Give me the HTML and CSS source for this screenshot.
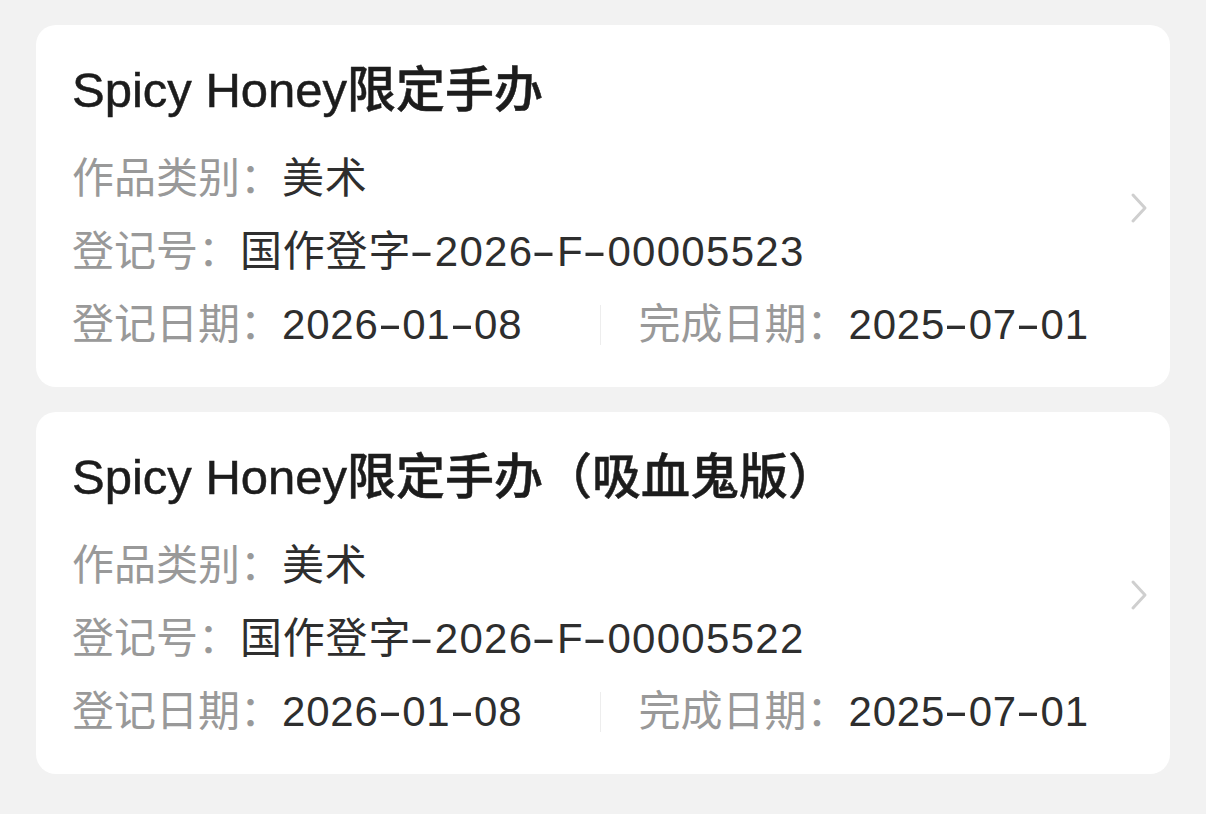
FILE: index.html
```html
<!DOCTYPE html>
<html lang="zh-CN">
<head>
<meta charset="utf-8">
<title>作品登记</title>
<link rel="stylesheet" href="styles.css">
</head>
<body>
<div class="list">
  <div class="card">
    <div class="content">
      <div class="title">Spicy Honey限定手办</div>
      <div class="row"><span class="label">作品类别：</span><span class="value">美术</span></div>
      <div class="row"><span class="label">登记号：</span><span class="value">国作登字<span class="reg"><span class="dash">-</span>2026<span class="dash">-</span>F<span class="dash">-</span>00005523</span></span></div>
      <div class="row dates">
        <div class="col"><span class="label">登记日期：</span><span class="value">2026<span class="dash">-</span>01<span class="dash">-</span>08</span></div>
        <div class="col col-right"><span class="label">完成日期：</span><span class="value">2025<span class="dash">-</span>07<span class="dash">-</span>01</span></div>
      </div>
    </div>
    <svg class="chevron" viewBox="0 0 20 32" width="20" height="32"><polyline points="4,3 16,16 4,29" fill="none" stroke="#cfcfcf" stroke-width="3" stroke-linecap="round" stroke-linejoin="round"/></svg>
  </div>
  <div class="card">
    <div class="content">
      <div class="title">Spicy Honey限定手办（吸血鬼版）</div>
      <div class="row"><span class="label">作品类别：</span><span class="value">美术</span></div>
      <div class="row"><span class="label">登记号：</span><span class="value">国作登字<span class="reg"><span class="dash">-</span>2026<span class="dash">-</span>F<span class="dash">-</span>00005522</span></span></div>
      <div class="row dates">
        <div class="col"><span class="label">登记日期：</span><span class="value">2026<span class="dash">-</span>01<span class="dash">-</span>08</span></div>
        <div class="col col-right"><span class="label">完成日期：</span><span class="value">2025<span class="dash">-</span>07<span class="dash">-</span>01</span></div>
      </div>
    </div>
    <svg class="chevron" viewBox="0 0 20 32" width="20" height="32"><polyline points="4,3 16,16 4,29" fill="none" stroke="#cfcfcf" stroke-width="3" stroke-linecap="round" stroke-linejoin="round"/></svg>
  </div>
</div>
</body>
</html>
```

FILE: styles.css
```css
html, body {
  margin: 0;
  padding: 0;
  background: #f2f2f2;
}
body {
  font-family: "Liberation Sans", "Noto Sans CJK SC", sans-serif;
  width: 1206px;
  height: 814px;
  overflow: hidden;
}
.list {
  display: flex;
  flex-direction: column;
  gap: 25px;
  padding: 25px 36px 0 36px;
}
.card {
  background: #ffffff;
  border-radius: 20px;
  display: flex;
  padding: 35px 21px 26px 36px;
}
.content {
  flex: 1;
  min-width: 0;
}
.title {
  font-size: 49px;
  line-height: 60px;
  font-weight: 500;
  color: #1c1c1c;
  -webkit-text-stroke: 0.5px #1c1c1c;
  margin-bottom: 22px;
  white-space: nowrap;
}
.row {
  font-size: 42px;
  line-height: 73px;
  height: 73px;
  white-space: nowrap;
}
.label {
  color: #999999;
}
.value {
  color: #2e2e2e;
  letter-spacing: 0.8px;
}
.reg {
  letter-spacing: 1.3px;
}
.dash {
  display: inline-block;
  width: 0.56em;
  text-align: center;
  transform: scaleX(1.75);
}
.dates {
  display: grid;
  grid-template-columns: 1fr 1fr;
  align-items: center;
}
.col {
  line-height: 40px;
}
.col-right {
  border-left: 1px solid #ededed;
  padding-left: 38px;
}
.chevron {
  align-self: center;
  margin-left: 2px;
  margin-bottom: 5px;
  flex-shrink: 0;
}
```
